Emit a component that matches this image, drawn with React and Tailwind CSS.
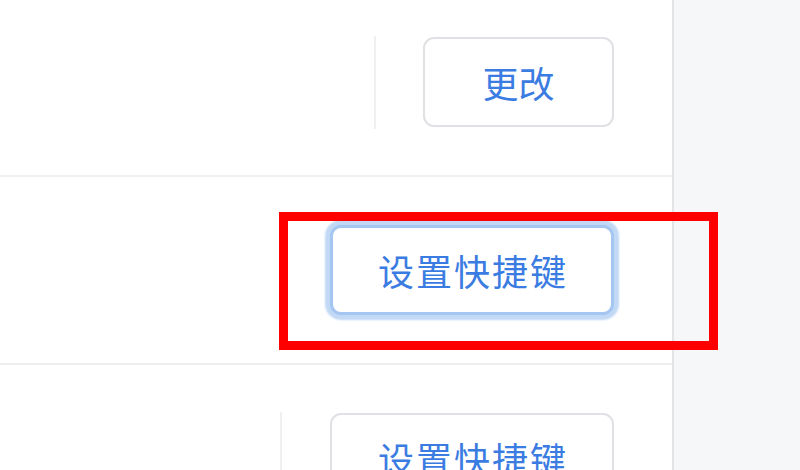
import React from "react";

// Settings rows, shown zoomed in, with a red annotation box over the focused button
const rows = [
  { label: "更改", width: "w-[191px]", divider: "mr-[47px]", track: "", focused: false },
  { label: "设置快捷键", width: "w-[284px]", divider: "mr-[48px]", track: "tracking-[2px] pl-[2px]", focused: true },
  { label: "设置快捷键", width: "w-[284px]", divider: "mr-[48px]", track: "tracking-[2px] pl-[2px]", focused: false },
];

const Row = ({ label, width, divider, track, focused }) => (
  <div className="h-[188px] shrink-0 flex items-center justify-end pr-[58px] border-b-2 border-[#efefef]">
    <div className={`w-[2px] h-[93px] bg-[#f0f0f0] ${divider} ${focused ? "opacity-0" : ""}`} />
    <button
      className={`${width} h-[90px] rounded-[11px] bg-white text-[36px] text-[#3b7ce2] leading-none ${track} ${
        focused
          ? "border-[3px] border-[#a4c6f1] shadow-[0_0_2px_5px_#c2d9f6]"
          : "border-2 border-[#e0e1e4]"
      }`}
    >
      {label}
    </button>
  </div>
);

export default function App() {
  return (
    <div
      className="relative w-[800px] h-[470px] overflow-hidden flex items-start bg-[#f6f7f9]"
      style={{ fontFamily: '"Noto Sans CJK SC", "Noto Sans", sans-serif' }}
    >
      <div className="w-[674px] h-[600px] shrink-0 bg-white border-r-2 border-[#e3e4e7] flex flex-col mt-[-11px]">
        {rows.map((r, i) => (
          <Row key={i} {...r} />
        ))}
      </div>
      <div className="flex-1" />

      {/* annotation box */}
      <div className="absolute left-[279px] top-[212px] w-[439px] h-[138px] border-[9px] border-[#ff0000]" />
    </div>
  );
}
